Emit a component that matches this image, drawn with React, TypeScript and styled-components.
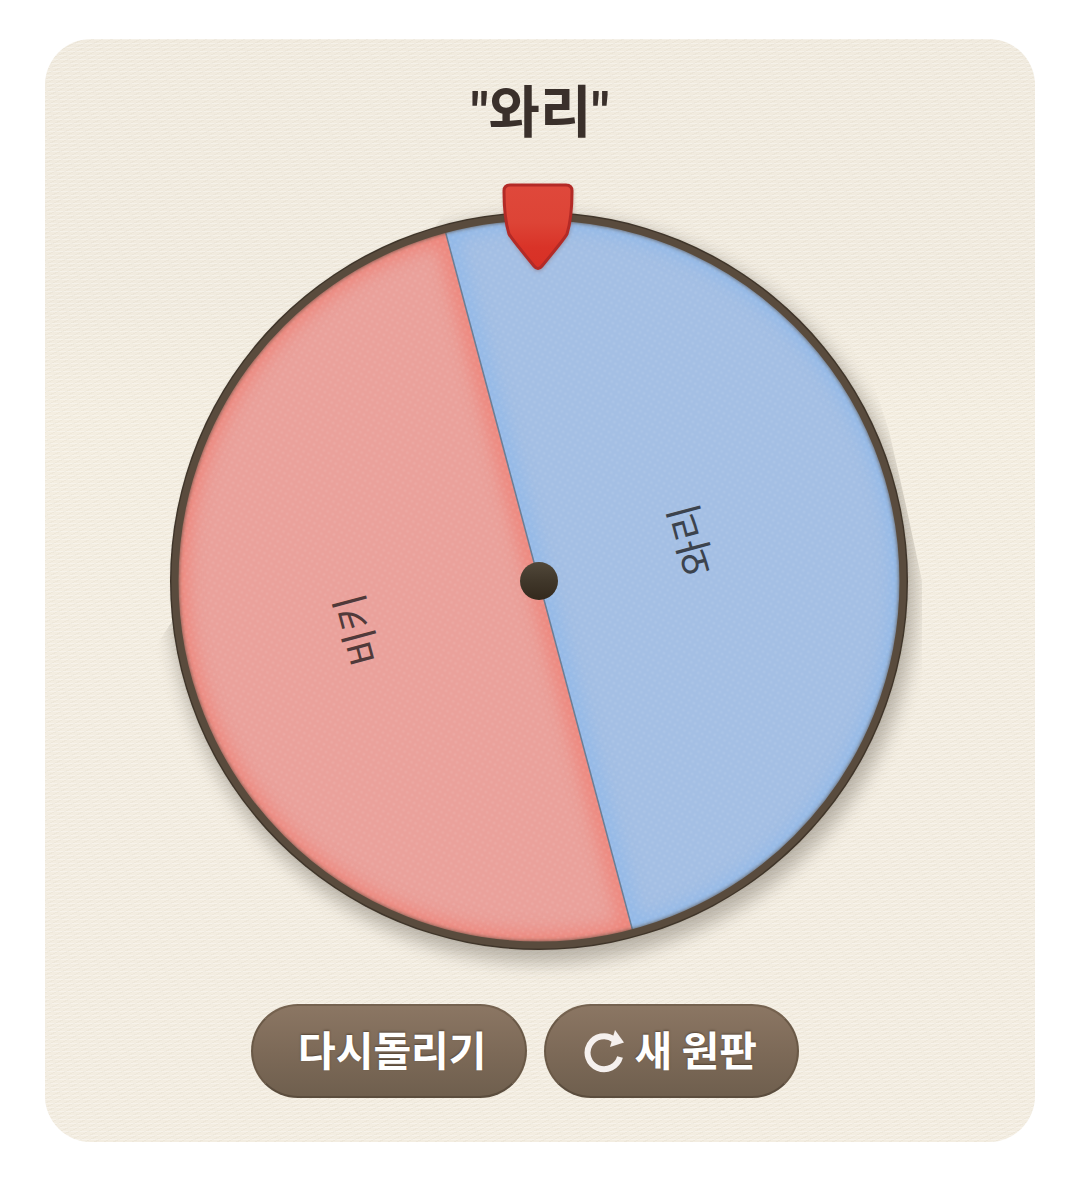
import React from "react";
import styled, { createGlobalStyle } from "styled-components";

const FONT = `"Noto Sans CJK KR", "Noto Sans", sans-serif`;

const GlobalStyle = createGlobalStyle`
  *, *::before, *::after { box-sizing: border-box; }
  body { margin: 0; background: #fff; font-family: ${FONT}; }
`;

const Page = styled.main`
  display: flex;
  justify-content: center;
  padding: 39px 45px;
`;

const Card = styled.section`
  display: flex;
  flex-direction: column;
  flex: 1;
  max-width: 1200px;
  padding-bottom: 44px;
  border-radius: 46px;
  background:
    repeating-linear-gradient(155deg, rgba(150, 135, 100, 0.06) 0 1px, transparent 1px 4px),
    repeating-linear-gradient(180deg, rgba(255, 255, 255, 0.3) 0 1px, transparent 1px 4px),
    linear-gradient(180deg, #f1ebdf 0%, #f1ebdf 24%, #f4eee1 34%, #f3ede1 60%, #f3ede1 100%);
`;

const Result = styled.h1`
  margin: 0;
  padding-top: 32px;
  height: 141px;
  text-align: center;
  font-family: Roboto, ${FONT};
  font-size: 56px;
  line-height: 84px;
  font-weight: 700;
  color: #3a302b;
`;

const Wheel = styled.svg`
  display: block;
  width: 100%;
  height: auto;
`;

const SliceLabel = styled.text`
  font-family: ${FONT};
  font-size: 39px;
  font-weight: 400;
  text-anchor: middle;
`;

const Actions = styled.div`
  display: flex;
  justify-content: center;
  gap: 17px;
  margin-top: 4px;
  padding-right: 30px;
`;

const PillButton = styled.button<{ $wide?: boolean }>`
  display: inline-flex;
  align-items: center;
  justify-content: center;
  gap: 9px;
  height: 94px;
  padding: ${(p) => (p.$wide ? "0 38px 0 45px" : "0 40px 0 38px")};
  border: 2px solid;
  border-color: #75624f #6a5947 #5b4d3e;
  border-radius: 47px;
  background: linear-gradient(180deg, #8b7663 0%, #7d6a58 50%, #6f5f4e 100%);
  color: #fff;
  font-family: ${FONT};
  font-size: 41px;
  line-height: 60px;
  font-weight: 700;
  text-shadow: 0 -1px 2px rgba(50, 36, 24, 0.55);
  white-space: nowrap;
  cursor: pointer;
`;

const ButtonLabel = styled.span`
  padding-bottom: 6px;
`;

const Icon = styled.svg`
  flex: none;
  width: 42px;
  height: 44px;
`;

const R = 362;
const LEFT_HALF = `M0 ${-R} A${R} ${R} 0 0 0 0 ${R} Z`;
const RIGHT_HALF = `M0 ${-R} A${R} ${R} 0 0 1 0 ${R} Z`;

function Roulette() {
  return (
    <Wheel viewBox="-494 -401 990 820" role="img" aria-label="원판">
      <defs>
        <filter id="soft" x="-20%" y="-20%" width="140%" height="140%">
          <feGaussianBlur stdDeviation="9" />
        </filter>
        <filter id="glow" x="-20%" y="-20%" width="140%" height="140%">
          <feGaussianBlur stdDeviation="9" />
        </filter>
        <filter id="thin" x="-20%" y="-20%" width="140%" height="140%">
          <feGaussianBlur stdDeviation="2" />
        </filter>
        <pattern id="weave" width="8" height="8" patternUnits="userSpaceOnUse">
          <circle cx="2" cy="2" r="1.5" fill="#fff" opacity="0.07" />
          <circle cx="6" cy="6" r="1.5" fill="#fff" opacity="0.07" />
        </pattern>
        <clipPath id="left"><path d={LEFT_HALF} /></clipPath>
        <clipPath id="right"><path d={RIGHT_HALF} /></clipPath>
        <clipPath id="shade">
          <path d="M-60 -420 H300 L335 -197 L350 -150 L366 -80 L383 0 V419 H-420 V120 Z" />
        </clipPath>
        <linearGradient id="hub" x1="0" y1="0" x2="0" y2="1">
          <stop offset="0" stopColor="#51483a" />
          <stop offset="0.5" stopColor="#40372a" />
          <stop offset="1" stopColor="#33291d" />
        </linearGradient>
        <linearGradient id="pin" x1="0" y1="0" x2="0" y2="1">
          <stop offset="0" stopColor="#df483b" />
          <stop offset="0.45" stopColor="#dd4436" />
          <stop offset="0.75" stopColor="#d93328" />
          <stop offset="1" stopColor="#d83025" />
        </linearGradient>
      </defs>

      <g clipPath="url(#shade)">
        <circle cx="4" cy="9" r="373" fill="#4a4238" opacity="0.34" filter="url(#soft)" />
      </g>
      <circle r="369" fill="#3d3328" />
      <circle r="367" fill="#594b3d" />

      <g transform="rotate(-15)">
        <g clipPath="url(#left)">
          <path d={LEFT_HALF} fill="#eaa19b" />
          <path d={LEFT_HALF} fill="none" stroke="#f0796d" strokeWidth="20" opacity="0.75" filter="url(#glow)" />
        </g>
        <g clipPath="url(#right)">
          <path d={RIGHT_HALF} fill="#a4bfe4" />
          <path d={RIGHT_HALF} fill="none" stroke="#86b5eb" strokeWidth="16" opacity="0.75" filter="url(#glow)" />
        </g>
        <circle r={R} fill="url(#weave)" />
        <path d={`M0 ${-R} V${R}`} stroke="#6b7f96" strokeWidth="1.5" />
      </g>
      <circle r="363" fill="none" stroke="#594b3d" strokeWidth="5" filter="url(#thin)" />
      <circle r="364" fill="none" stroke="#594b3d" strokeWidth="7" />

      <SliceLabel fill="#3c434d" transform="translate(166 -45) rotate(-105)">와리</SliceLabel>
      <SliceLabel fill="#503a3a" transform="translate(-168 45) rotate(-105)">비키</SliceLabel>

      <circle r="19" fill="url(#hub)" />

      <path
        d="M-28 -397 H27 Q34 -397 34 -390 C34 -372 33 -360 29 -347 Q27 -343 4 -315 Q-1 -309 -6 -315 Q-28 -343 -30 -347 C-34 -360 -35 -372 -35 -390 Q-35 -397 -28 -397 Z"
        fill="#6b2a20" opacity="0.35" filter="url(#thin)" transform="translate(0 2)"
      />
      <path
        d="M-29 -396 H27 Q33 -396 33 -390 C33 -372 32 -360 28 -347 Q26 -343 3 -315 Q-1 -310 -5 -315 Q-28 -343 -30 -347 C-34 -360 -35 -372 -35 -390 Q-35 -396 -29 -396 Z"
        fill="url(#pin)" stroke="#b32a26" strokeWidth="3"
      />
    </Wheel>
  );
}

function RefreshIcon() {
  return (
    <Icon viewBox="0 0 42 44" aria-hidden="true">
      <path d="M36 28 A16.5 16.5 0 1 1 30 10.5" fill="none" stroke="#f5f0ee" strokeWidth="6" />
      <path d="M31 1 L40 13.5 L26 18 Z" fill="#f5f0ee" />
    </Icon>
  );
}

export default function App() {
  return (
    <>
      <GlobalStyle />
      <Page>
        <Card>
          <Result>"와리"</Result>
          <Roulette />
          <Actions>
            <PillButton type="button" $wide>
              <ButtonLabel>다시돌리기</ButtonLabel>
            </PillButton>
            <PillButton type="button">
              <RefreshIcon />
              <ButtonLabel>새 원판</ButtonLabel>
            </PillButton>
          </Actions>
        </Card>
      </Page>
    </>
  );
}
